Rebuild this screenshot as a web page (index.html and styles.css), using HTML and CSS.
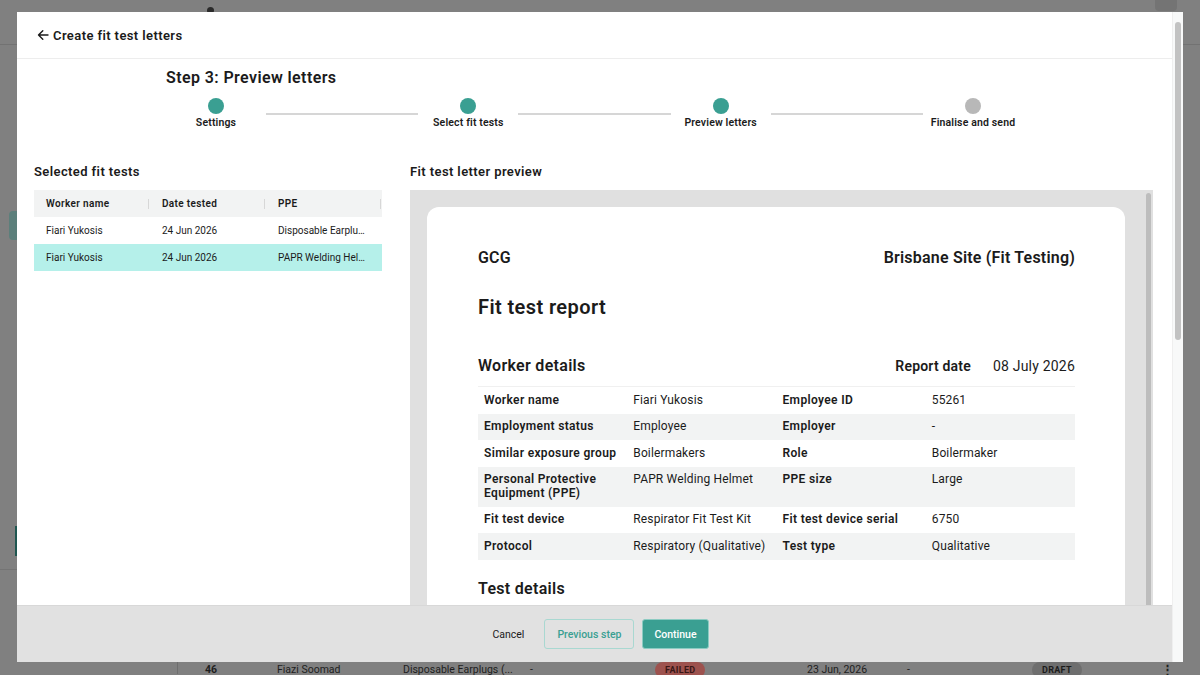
FILE: index.html
```html
<!DOCTYPE html>
<html lang="en">
<head>
    <meta charset="UTF-8">
    <meta name="viewport" content="width=device-width, initial-scale=1.0">
    <title>Create fit test letters</title>
    <link rel="stylesheet" href="styles.css">
</head>
<body>

<!-- page behind the dialog (dimmed) -->
<div class="app">
    <div class="app-top">
        <span class="app-top-icon"></span>
        <span class="app-top-btn"></span>
    </div>
    <div class="app-mid">
        <div class="app-side">
            <div class="side-item"></div>
            <div class="side-active"></div>
            <div class="side-rule"></div>
        </div>
    </div>
    <div class="app-row">
        <span class="cell cell-id">46</span>
        <span class="cell">Fiazi Soomad</span>
        <span class="cell">Disposable Earplugs (...</span>
        <span class="cell">-</span>
        <span class="cell"><span class="badge failed">FAILED</span></span>
        <span class="cell">23 Jun, 2026</span>
        <span class="cell">-</span>
        <span class="cell"><span class="badge draft">DRAFT</span></span>
        <span class="cell cell-menu">&#8942;</span>
    </div>
</div>

<div class="modal">
    <div class="modal-main">
        <header class="modal-head">
            <svg width="12" height="12" viewBox="0 0 12 12" fill="none" stroke="#1b1b1b" stroke-width="1.4" stroke-linecap="round" stroke-linejoin="round">
                <path d="M11 6H1.5M5.8 1.7L1.5 6l4.3 4.3"/>
            </svg>
            <span>Create fit test letters</span>
        </header>

        <div class="modal-body">
            <div class="steps-wrap">
                <h2 class="step-title">Step 3: Preview letters</h2>
                <div class="stepper">
                    <div class="step"><span class="dot"></span><span class="step-label">Settings</span></div>
                    <div class="connector"></div>
                    <div class="step"><span class="dot"></span><span class="step-label">Select fit tests</span></div>
                    <div class="connector"></div>
                    <div class="step"><span class="dot"></span><span class="step-label">Preview letters</span></div>
                    <div class="connector"></div>
                    <div class="step todo"><span class="dot"></span><span class="step-label">Finalise and send</span></div>
                </div>
            </div>

            <div class="panels">
                <div class="panel-left">
                    <h3 class="panel-title">Selected fit tests</h3>
                    <table class="tests">
                        <thead>
                            <tr><th>Worker name</th><th>Date tested</th><th>PPE</th></tr>
                        </thead>
                        <tbody>
                            <tr><td>Fiari Yukosis</td><td>24 Jun 2026</td><td>Disposable Earplugs</td></tr>
                            <tr class="selected"><td>Fiari Yukosis</td><td>24 Jun 2026</td><td>PAPR Welding Helmet</td></tr>
                        </tbody>
                    </table>
                </div>

                <div class="panel-right">
                    <h3 class="panel-title">Fit test letter preview</h3>
                    <div class="preview">
                        <div class="preview-area">
                            <div class="paper">
                                <div class="paper-top">
                                    <span>GCG</span>
                                    <span>Brisbane Site (Fit Testing)</span>
                                </div>
                                <h1 class="report-title">Fit test report</h1>
                                <div class="section-head">
                                    <h4>Worker details</h4>
                                    <div class="report-date"><b>Report date</b><span>08 July 2026</span></div>
                                </div>
                                <table class="details">
                                    <tr><th>Worker name</th><td>Fiari Yukosis</td><th>Employee ID</th><td>55261</td></tr>
                                    <tr><th>Employment status</th><td>Employee</td><th>Employer</th><td>-</td></tr>
                                    <tr><th>Similar exposure group</th><td>Boilermakers</td><th>Role</th><td>Boilermaker</td></tr>
                                    <tr><th>Personal Protective Equipment (PPE)</th><td>PAPR Welding Helmet</td><th>PPE size</th><td>Large</td></tr>
                                    <tr><th>Fit test device</th><td>Respirator Fit Test Kit</td><th>Fit test device serial</th><td>6750</td></tr>
                                    <tr><th>Protocol</th><td>Respiratory (Qualitative)</td><th>Test type</th><td>Qualitative</td></tr>
                                </table>
                                <h4 class="test-details">Test details</h4>
                            </div>
                        </div>
                        <div class="preview-track"><div class="preview-thumb"></div></div>
                    </div>
                </div>
            </div>
        </div>

        <footer class="modal-foot">
            <button class="btn btn-text">Cancel</button>
            <button class="btn btn-outline">Previous step</button>
            <button class="btn btn-primary">Continue</button>
        </footer>
    </div>
    <div class="modal-track"><div class="modal-thumb"></div></div>
</div>

</body>
</html>
```

FILE: styles.css
```css
body {
    margin: 0;
    padding: 0;
    height: 675px;
    overflow: hidden;
    background-color: #808080; /* dimmed page */
    font-family: Roboto, "Liberation Sans", sans-serif;
    color: #1b1b1b;
}

/* ---------- page behind the dialog ---------- */

.app {
    display: flex;
    flex-direction: column;
    height: 675px;
}

.app-top {
    height: 45px;
    border-bottom: 1px solid #727272;
    display: flex;
    align-items: flex-start;
    box-sizing: border-box;
}

.app-top-icon {
    width: 7px;
    height: 7px;
    margin: 7px 0 0 207px;
    border-radius: 50%;
    background-color: #2a2a2a;
}

.app-top-btn {
    width: 22px;
    height: 11px;
    margin-left: auto;
    margin-right: 23px;
    border-radius: 0 0 4px 4px;
    background-color: #747474;
}

.app-mid {
    flex: 1;
    display: flex;
}

.app-side {
    width: 17px;
    display: flex;
    flex-direction: column;
    align-items: flex-end;
}

.side-item {
    width: 8px;
    height: 29px;
    margin-top: 166px;
    border-radius: 4px 0 0 4px;
    background-color: #5c7f7b;
}

.side-active {
    width: 2px;
    height: 30px;
    margin-top: 286px;
    background-color: #1f5650;
}

.side-rule {
    width: 17px;
    height: 1px;
    margin-top: 13px;
    background-color: #747474;
}

.app-row {
    height: 12px;
    margin: 0 0 1px 177px;
    border-left: 1px solid #6e6e6e;
    display: grid;
    grid-template-columns: 99px 126px 127px 125px 152px 100px 125px 128px 1fr;
    align-items: center;
    font-size: 10.5px;
    line-height: 12px;
    color: #1e1e1e;
}

.cell {
    white-space: nowrap;
}

.cell-id {
    padding-left: 27px;
    font-weight: 700;
}

.cell-menu {
    font-size: 13px;
    font-weight: 700;
    padding-left: 1px;
}

.badge {
    display: inline-block;
    padding: 3px 10px;
    border-radius: 12px;
    font-size: 9px;
    line-height: 10px;
    font-weight: 700;
    letter-spacing: 0.3px;
}

.badge.failed {
    background-color: #9d524e;
    color: #3a1716;
}

.badge.draft {
    background-color: #6e6e6e;
    color: #1c1c1c;
}

/* ---------- dialog ---------- */

.modal {
    position: fixed;
    top: 12px;
    left: 17px;
    width: 1166px;
    height: 650px;
    background-color: #fff;
    display: flex;
}

.modal-main {
    flex: 1;
    display: flex;
    flex-direction: column;
    min-width: 0;
}

.modal-track {
    width: 11px;
    background-color: #f8f9f9;
    border-left: 1px solid #efefef;
    box-sizing: border-box;
}

.modal-thumb {
    width: 6px;
    height: 318px;
    margin: 10px 0 0 2px;
    border-radius: 3px;
    background-color: #c2c2c2;
}

.modal-head {
    height: 47px;
    box-sizing: border-box;
    border-bottom: 1px solid #ededed;
    display: flex;
    align-items: center;
    gap: 4px;
    padding-left: 20px;
    font-size: 13px;
    font-weight: 600;
    letter-spacing: 0.4px;
}

.modal-body {
    flex: 1;
    min-height: 0;
    overflow: hidden;
}

.steps-wrap {
    width: 857px;
    margin: 0 auto;
    padding-top: 9px;
}

.step-title {
    margin: 0;
    font-size: 16px;
    line-height: 20px;
    font-weight: 600;
    letter-spacing: 0.4px;
}

.stepper {
    display: flex;
    margin-top: 10px;
}

.step {
    width: 100px;
    display: flex;
    flex-direction: column;
    align-items: center;
}

.dot {
    width: 16px;
    height: 16px;
    border-radius: 50%;
    background-color: #3a9f92;
}

.step.todo .dot {
    background-color: #b8b8b8;
}

.step-label {
    margin-top: 2px;
    font-size: 10.5px;
    line-height: 13px;
    font-weight: 600;
    letter-spacing: 0.15px;
    white-space: nowrap;
}

.connector {
    flex: 1;
    height: 1.5px;
    margin-top: 15px;
    background-color: #d6d6d6;
}

.panels {
    display: flex;
    gap: 28px;
    padding: 0 17px;
    margin-top: 35px;
}

.panel-left {
    width: 348px;
}

.panel-right {
    flex: 1;
    min-width: 0;
}

.panel-title {
    margin: 0 0 10px;
    font-size: 13px;
    line-height: 16px;
    font-weight: 600;
    letter-spacing: 0.4px;
}

/* selected fit tests table */

.tests {
    width: 348px;
    border-collapse: collapse;
    table-layout: fixed;
    font-size: 10px;
}

.tests th {
    position: relative;
    height: 27px;
    padding: 0 12px;
    text-align: left;
    font-weight: 600;
    letter-spacing: 0.35px;
    background-color: #f2f3f3;
}

.tests th::after {
    content: "";
    position: absolute;
    right: 1px;
    top: 9px;
    width: 1px;
    height: 10px;
    background-color: #d7d7d7;
}

.tests td {
    height: 27px;
    padding: 0 16px 0 12px;
    white-space: nowrap;
    overflow: hidden;
    text-overflow: ellipsis;
}

.tests tr.selected td {
    background-color: #b5f0ea;
}

/* letter preview */

.preview {
    display: flex;
    height: 520px;
    margin-right: 2px;
    background-color: #e0e0e0;
}

.preview-area {
    flex: 1;
    padding: 17px 20px 0 17px;
}

.preview-track {
    width: 8px;
}

.preview-thumb {
    width: 5px;
    height: 500px;
    margin: 3px 0 0 1px;
    border-radius: 3px;
    background-color: #bdbdbd;
}

.paper {
    background-color: #fff;
    border-radius: 12px 12px 0 0;
    padding: 41px 50px 0 51px;
    min-height: 560px;
}

.paper-top {
    display: flex;
    justify-content: space-between;
    font-size: 16px;
    line-height: 19px;
    font-weight: 600;
    letter-spacing: 0.2px;
}

.report-title {
    margin: 28px 0 0;
    font-size: 20px;
    line-height: 24px;
    font-weight: 600;
    letter-spacing: 0.4px;
}

.section-head {
    display: flex;
    justify-content: space-between;
    align-items: center;
    margin-top: 37px;
}

.section-head h4 {
    margin: 0;
    font-size: 16px;
    line-height: 19px;
    font-weight: 600;
    letter-spacing: 0.3px;
}

.report-date {
    display: flex;
    gap: 22px;
    font-size: 14px;
    letter-spacing: 0.2px;
}

.report-date b {
    font-weight: 600;
}

.details {
    width: 100%;
    margin-top: 11px;
    border-collapse: collapse;
    table-layout: fixed;
    font-size: 12px;
    line-height: 13.5px;
    letter-spacing: 0.15px;
    border-top: 1px solid #f0f0f0;
}

.details th,
.details td {
    padding: 6.5px 6px;
    text-align: left;
    vertical-align: top;
}

.details th {
    font-weight: 600;
    letter-spacing: 0.35px;
}

.details tr:nth-child(even) {
    background-color: #f2f3f3;
}

.test-details {
    margin: 19px 0 0;
    font-size: 16px;
    line-height: 19px;
    font-weight: 600;
    letter-spacing: 0.3px;
}

/* footer */

.modal-foot {
    height: 57px;
    box-sizing: border-box;
    border-top: 1px solid #d8d8d8;
    background-color: #e1e1e1;
    display: flex;
    justify-content: center;
    align-items: center;
    gap: 8px;
}

.btn {
    height: 30px;
    padding: 0 12px;
    border-radius: 3px;
    font-family: Roboto, "Liberation Sans", sans-serif;
    font-size: 10.5px;
    cursor: pointer;
}

.btn-text {
    border: none;
    background: none;
    color: #1b1b1b;
}

.btn-outline {
    border: 1px solid #a9d8d1;
    background-color: #e1e1e1;
    color: #3a9f92;
    font-weight: 500;
}

.btn-primary {
    border: 1px solid #8ccbc2;
    background-color: #3a9f92;
    color: #fff;
    font-weight: 500;
    padding: 0 11px;
}
```
